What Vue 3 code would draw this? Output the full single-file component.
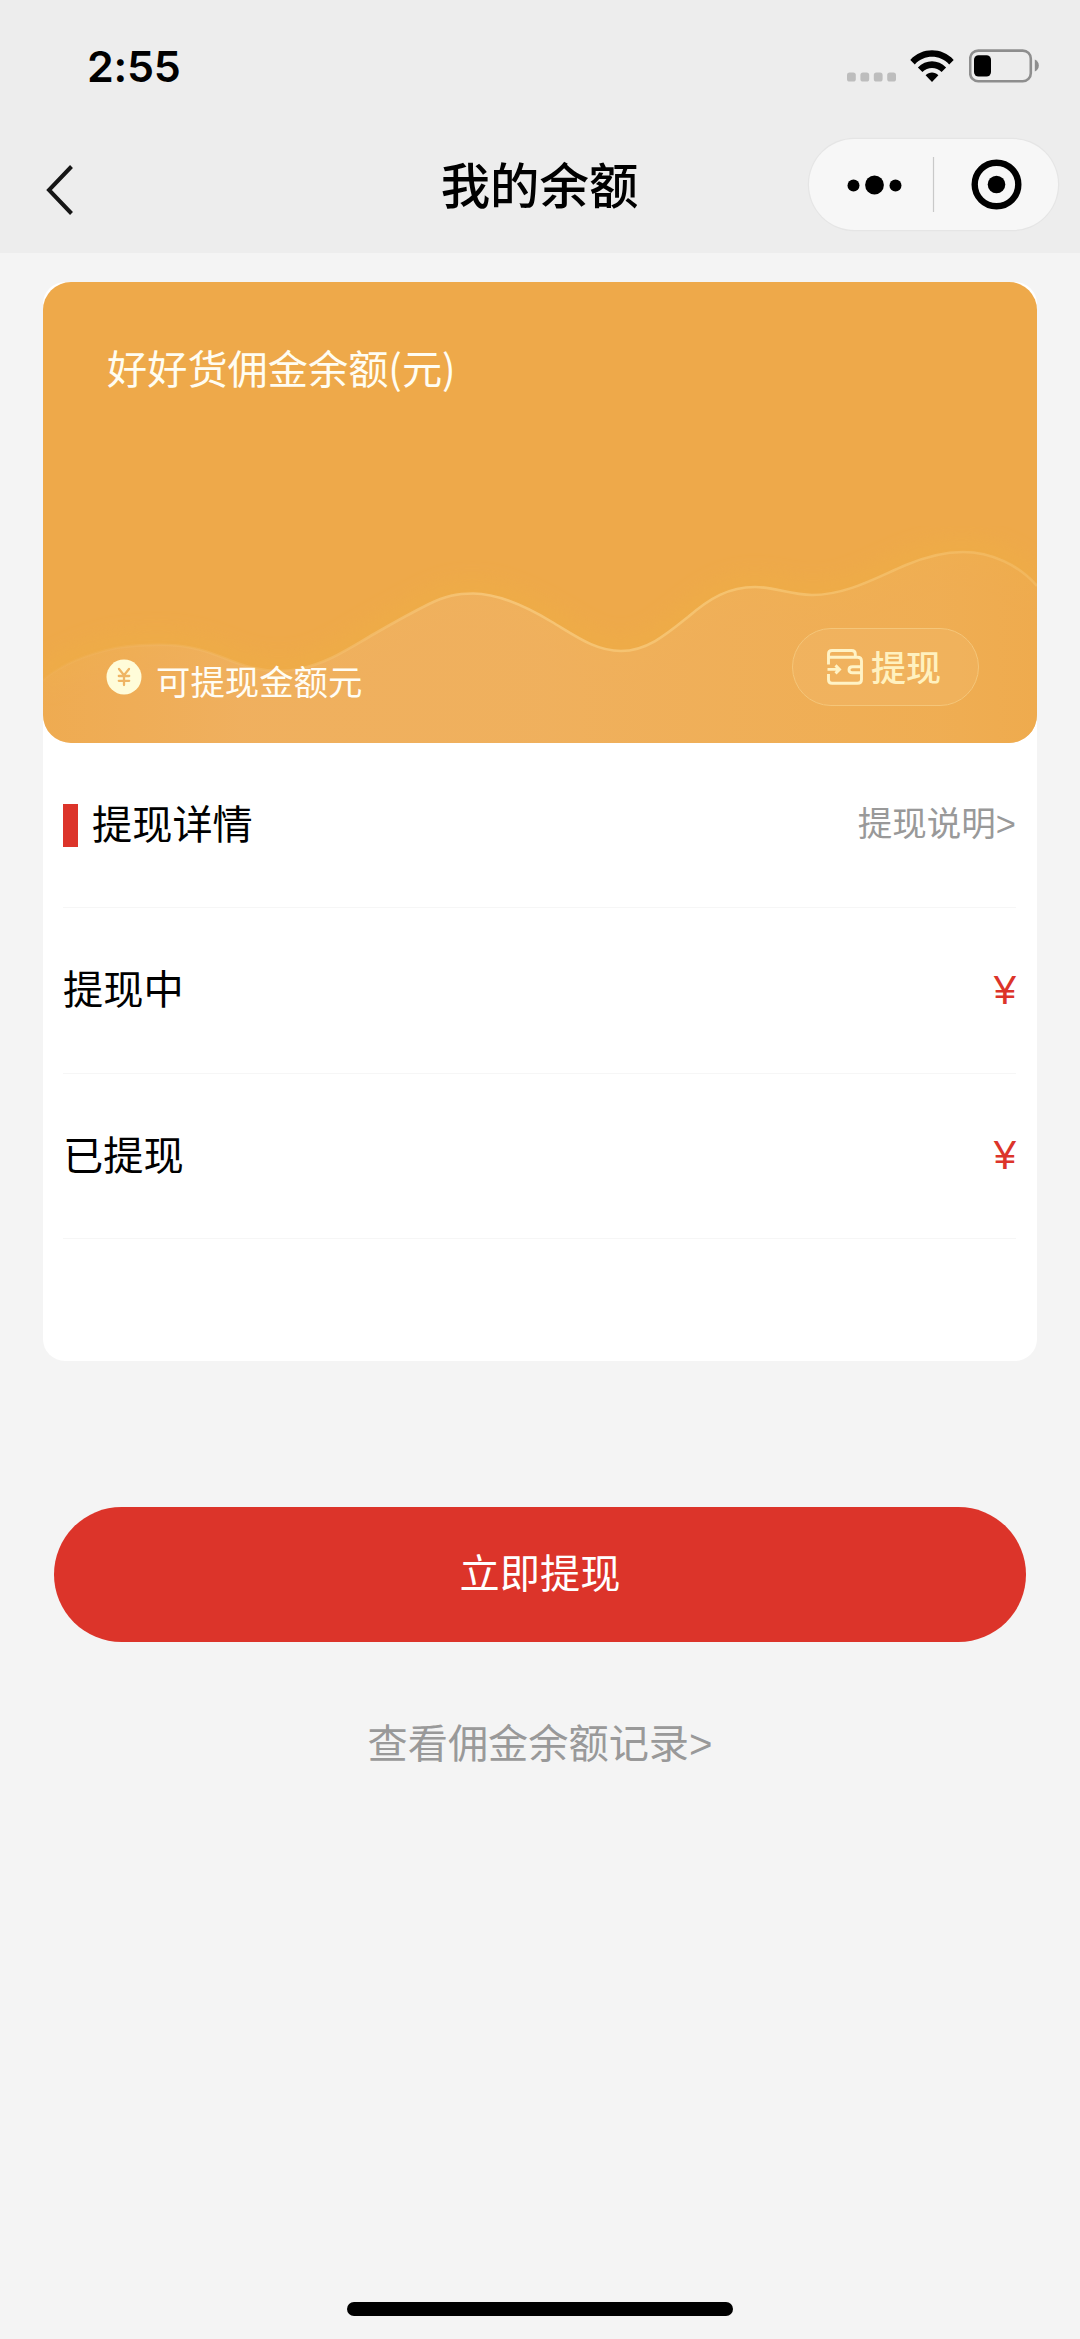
<script setup>
const rows = [
  { label: '提现中', value: '¥' },
  { label: '已提现', value: '¥' },
]
const wave =
  'M0 398 C20 381 45 372 73 366 C92 363 108 362.5 125 363 C155 364 175 374 194 381 C215 389 235 391 256 387 C285 381 305 367 331 352 C350 341 368 331 386 322 C402 314 414 311.5 430 311.5 C456 311.5 484 325 509 340 C534 355 553 369 578 369 C604 369 624 352 645 335 C667 316 686 305 712 305 C731 305 748 313 769 313 C804 313 834 295 863 283 C882 275 900 270 920 270 C948 270 976 283 994 304'
</script>

<template>
  <div class="page">
    <header class="header">
      <div class="status">
        <span class="time">2:55</span>
        <div class="status-icons">
          <svg class="signal" width="49" height="10" viewBox="0 0 49 10">
            <rect v-for="i in 4" :key="i" :x="(i - 1) * 13.4" y="0.5" width="8.8" height="9" rx="2.6" fill="#bdbdbd" />
          </svg>
          <svg class="wifi" width="44" height="33" viewBox="0 0 44 33">
            <path d="M0.3 9.9 C12 -2.9 32 -2.9 43.7 9.9 L39.2 14.4 C29.7 4.2 14.3 4.2 4.8 14.4 Z" />
            <path d="M7.9 17.5 C15.8 9.3 28.2 9.3 36.1 17.5 L31.6 22 C26.2 16.6 17.8 16.6 12.4 22 Z" />
            <path d="M15.6 25.2 C19.2 21.6 24.8 21.6 28.4 25.2 L22 32 Z" />
          </svg>
          <svg class="battery" width="70" height="34" viewBox="0 0 70 34">
            <rect x="1.2" y="1.6" width="60.6" height="30.6" rx="8" fill="none" stroke="#8e8e8e" stroke-width="2.6" />
            <rect x="5" y="6.3" width="17" height="21.3" rx="4.5" />
            <path d="M65.8 10.6 Q69.8 12.4 69.8 16.6 Q69.8 20.8 65.8 22.6 Z" fill="#8e8e8e" />
          </svg>
        </div>
      </div>
      <nav class="nav">
        <div class="nav-side">
          <svg class="back" width="30" height="52" viewBox="0 0 30 52">
            <path d="M26.5 2.5 L4 26 L26.5 49.5" fill="none" stroke="#161616" stroke-width="4" />
          </svg>
        </div>
        <h1 class="title">我的余额</h1>
        <div class="nav-side nav-right">
          <div class="capsule">
            <svg width="249" height="91" viewBox="0 0 249 91">
              <circle cx="44.5" cy="46.5" r="6" />
              <circle cx="65.5" cy="46" r="9.4" />
              <circle cx="86.5" cy="46.5" r="6" />
              <path d="M124.5 18 V73" stroke="#c9c9c9" stroke-width="1.2" />
              <circle cx="187.5" cy="45.5" r="21.8" fill="none" stroke="#000" stroke-width="6.4" />
              <circle cx="187.5" cy="45.5" r="8.8" />
            </svg>
          </div>
        </div>
      </nav>
    </header>

    <main class="content">
      <section class="panel">
        <div class="card">
          <svg class="wave" width="994" height="461" viewBox="0 0 994 461">
            <defs>
              <linearGradient id="body" x1="0" y1="0" x2="1" y2="0">
                <stop offset="0" stop-color="#f0b062" stop-opacity="0.3" />
                <stop offset="0.2" stop-color="#f0b265" stop-opacity="0.75" />
                <stop offset="0.5" stop-color="#f0b262" stop-opacity="0.8" />
                <stop offset="0.9" stop-color="#f0b058" stop-opacity="0.65" />
                <stop offset="1" stop-color="#efac50" stop-opacity="0.65" />
              </linearGradient>
              <linearGradient id="edge" x1="0" y1="0" x2="1" y2="0">
                <stop offset="0" stop-color="#f3bd6c" stop-opacity="0.1" />
                <stop offset="0.25" stop-color="#f3bd6c" stop-opacity="0.5" />
                <stop offset="0.45" stop-color="#f6c475" />
                <stop offset="0.7" stop-color="#f5c26e" />
                <stop offset="1" stop-color="#f4be68" stop-opacity="0.6" />
              </linearGradient>
              <filter id="soft" x="-5%" y="-20%" width="110%" height="140%">
                <feGaussianBlur stdDeviation="11" />
              </filter>
            </defs>
            <path :d="wave" fill="none" stroke="#efb243" stroke-width="22" opacity="0.4" filter="url(#soft)" />
            <path :d="wave + ' V461 H0 Z'" fill="url(#body)" />
            <path :d="wave" fill="none" stroke="url(#edge)" stroke-width="2.6" />
          </svg>
          <div class="card-title">好好货佣金余额(元)</div>
          <div class="card-foot">
            <div class="available">
              <svg class="coin" width="36" height="36" viewBox="0 0 36 36">
                <circle cx="18" cy="18" r="17.5" fill="#fffcd9" />
                <path d="M13 10 L18 16.2 L23 10 M12.8 17 H23.2 M12.8 21.8 H23.2 M18 16 V26" fill="none" stroke="#efb564" stroke-width="2.3" stroke-linecap="round" />
              </svg>
              <span class="available-text">可提现金额元</span>
            </div>
            <div class="chip">
              <svg class="wallet" width="36" height="36" viewBox="0 0 36 36" fill="none" stroke="#fff3c6" stroke-width="2.9">
                <path d="M1.5 15.5 V5 Q1.5 1.5 5 1.5 H24.5 Q28.3 1.5 28.3 5 V8.2" />
                <path d="M1.5 8.2 H30.5 Q34.5 8.2 34.5 12 V30.5 Q34.5 34.3 30.5 34.3 H5 Q1.5 34.3 1.5 30.8 V25" />
                <path d="M34.5 17.8 H25.5 Q22 17.8 22 20.8 Q22 23.8 25.5 23.8 H34.5" />
                <path d="M0.5 20.4 H12.5 M8.5 16.4 L12.5 20.4 L8.5 24.4" />
              </svg>
              <span class="chip-text">提现</span>
            </div>
          </div>
        </div>

        <div class="rows">
          <div class="row">
            <div class="row-title">
              <i class="mark"></i>
              <span class="txt">提现详情</span>
            </div>
            <span class="txt hint">提现说明<span class="latin">&gt;</span></span>
          </div>
          <div v-for="r in rows" :key="r.label" class="row">
            <span class="txt">{{ r.label }}</span>
            <span class="txt amount latin">{{ r.value }}</span>
          </div>
        </div>
      </section>

      <button class="submit"><span>立即提现</span></button>
      <a class="records">查看佣金余额记录<span class="latin">&gt;</span></a>
    </main>

    <div class="home"></div>
  </div>
</template>

<style>
body {
  margin: 0;
  background: #f4f4f4;
}
</style>

<style scoped>
.page {
  display: flex;
  flex-direction: column;
  width: 1080px;
  height: 2339px;
  overflow: hidden;
  background: #f4f4f4;
  color: #000;
  font-family: 'Noto Sans CJK SC', sans-serif;
  font-size: 40.2px;
}
svg {
  display: block;
  flex: none;
}
.latin {
  font-family: 'Liberation Sans', sans-serif;
}
.header {
  height: 253px;
  background: #ededed;
}
.status {
  display: flex;
  justify-content: space-between;
  height: 132px;
  box-sizing: border-box;
  padding: 0 41px 0 87px;
}
.time {
  margin-top: 40px;
  font: 600 43px/52px Inter, sans-serif;
  letter-spacing: -0.3px;
}
.status-icons {
  display: flex;
  align-items: flex-start;
}
.signal {
  margin: 72px 14px 0 0;
}
.wifi {
  margin: 50px 15px 0 0;
}
.battery {
  margin-top: 49px;
}
.nav {
  display: flex;
  align-items: flex-start;
  height: 121px;
}
.nav-side {
  flex: 1;
}
.back {
  margin: 32px 0 0 45px;
}
.title {
  margin: 16px 1px 0 0;
  font-size: 49.4px;
  line-height: 70px;
  font-weight: 500;
}
.nav-right {
  display: flex;
  justify-content: flex-end;
}
.capsule {
  box-sizing: border-box;
  width: 249px;
  height: 91px;
  margin: 7px 22px 0 0;
  border-radius: 46px;
  background: #f7f7f7;
  box-shadow: 0 0 0 1.2px #e5e5e5;
}
.content {
  display: flex;
  flex-direction: column;
  padding: 29px 43px 0;
}
.panel {
  height: 1079px;
  background: #fff;
  border-radius: 22px;
}
.card {
  position: relative;
  display: flex;
  flex-direction: column;
  justify-content: space-between;
  height: 461px;
  border-radius: 28px;
  overflow: hidden;
  background: #eea94a;
}
.wave {
  position: absolute;
  left: 0;
  top: 0;
}
.card-title {
  position: relative;
  margin: 57px 0 0 64px;
  line-height: 56px;
  color: #fffdf2;
}
.card-foot {
  position: relative;
  display: flex;
  justify-content: space-between;
  align-items: flex-start;
  height: 115px;
  padding: 0 58px 0 63px;
}
.available {
  display: flex;
  align-items: flex-start;
  padding-top: 31px;
}
.available-text {
  margin: -1px 0 0 14px;
  font-size: 34.4px;
  line-height: 44px;
  color: #fffdf5;
}
.chip {
  display: flex;
  align-items: center;
  box-sizing: border-box;
  width: 187px;
  height: 78px;
  padding-left: 34px;
  border: 1.5px solid #f5c679;
  border-radius: 39px;
  background: rgba(242, 186, 108, 0.4);
}
.chip-text {
  margin: -3px 0 0 8px;
  font-size: 35px;
  line-height: 50px;
  font-weight: 500;
  color: #fff1bf;
}
.rows {
  padding: 0 21px 0 20px;
}
.row {
  display: flex;
  align-items: center;
  justify-content: space-between;
  box-sizing: border-box;
  height: 165.3px;
  border-bottom: 1.5px solid #f6f6f6;
}
.row-title {
  display: flex;
  align-items: center;
}
.mark {
  width: 15px;
  height: 43px;
  margin-right: 14px;
  background: #dc342a;
}
.txt {
  line-height: 60px;
  margin-top: -6px;
}
.hint {
  font-size: 34.5px;
  color: #999;
}
.amount {
  margin-top: 1px;
  color: #dc342a;
}
.submit {
  height: 135px;
  margin: 146px 11px 0;
  padding: 0 0 8px;
  border: 0;
  border-radius: 68px;
  background: #dc342a;
  color: #fff;
  font: inherit;
}
.records {
  margin-top: 69px;
  line-height: 60px;
  text-align: center;
  color: #999;
}
.home {
  width: 386px;
  height: 14.5px;
  margin: auto auto 23px;
  border-radius: 8px;
  background: #000;
}
</style>
